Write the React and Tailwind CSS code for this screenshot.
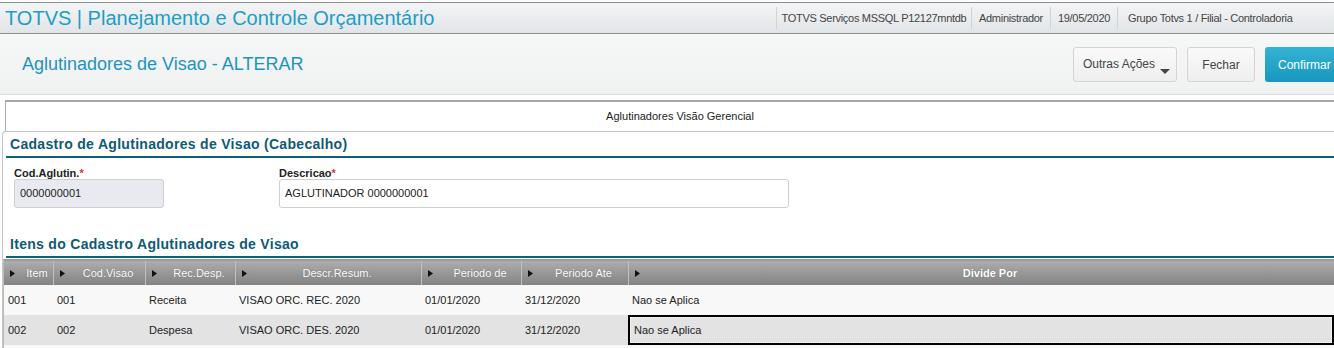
import React from "react";

const topInfo = [
  { label: "TOTVS Serviços MSSQL P12127mntdb", w: "w-[195px] justify-center" },
  { label: "Administrador", w: "w-[79px] justify-center" },
  { label: "19/05/2020", w: "w-[67px] justify-center" },
  { label: "Grupo Totvs 1 / Filial - Controladoria", w: "w-[217px] pl-[10px]" },
];

const columns = [
  { title: "Item", w: "w-[49px]" },
  { title: "Cod.Visao", w: "w-[92px]" },
  { title: "Rec.Desp.", w: "w-[90px]" },
  { title: "Descr.Resum.", w: "w-[186px]" },
  { title: "Periodo de", w: "w-[100px]" },
  { title: "Periodo Ate", w: "w-[107px]" },
  { title: "Divide Por", w: "w-[706px]", bold: true },
];

const rows = [
  ["001", "001", "Receita", "VISAO ORC. REC. 2020", "01/01/2020", "31/12/2020", "Nao se Aplica"],
  ["002", "002", "Despesa", "VISAO ORC. DES. 2020", "01/01/2020", "31/12/2020", "Nao se Aplica"],
];

const SectionTitle = ({ children }) => (
  <div className="ml-[3px] border-b-2 border-[#0e6078] pl-[4px] pb-[3px]">
    <h2 className="text-[14px] font-bold leading-[18px] tracking-[0.3px] text-[#0f5a75]">{children}</h2>
  </div>
);

const Arrow = () => (
  <svg width="5" height="7" viewBox="0 0 5 7" className="shrink-0">
    <path d="M0 0 L5 3.5 L0 7 Z" fill="#111" />
  </svg>
);

export default function App() {
  return (
    <div className="w-[1334px] h-[348px] overflow-hidden bg-white font-['Liberation_Sans',Arial,sans-serif] text-[#222]">
      {/* top bar */}
      <div className="h-[34px] pt-[2px] bg-white">
        <div className="flex h-[32px] items-center border-y border-[#8f8f8f] bg-gradient-to-b from-[#f3f4f5] to-[#e2e5e8]">
          <div className="pl-[5px] text-[20px] leading-none text-[#1b9ec8] whitespace-nowrap">
            TOTVS | Planejamento e Controle Orçamentário
          </div>
          <div className="ml-auto flex h-full items-center">
            {topInfo.map((t) => (
              <div
                key={t.label}
                className={`flex h-[22px] items-center border-l border-[#cfd3d6] whitespace-nowrap text-[11px] tracking-[-0.3px] text-[#444] ${t.w}`}
              >
                {t.label}
              </div>
            ))}
          </div>
        </div>
      </div>

      {/* page header */}
      <div className="flex h-[61px] items-center border-b border-[#dcdcdc] bg-gradient-to-b from-[#f6f7f7] to-[#f0f1f1]">
        <h1 className="pl-[22px] text-[18px] leading-none text-[#1f93c0]">Aglutinadores de Visao - ALTERAR</h1>
        <div className="ml-auto flex items-center gap-[10px] pt-[1px]">
          <button className="relative h-[35px] w-[104px] rounded-[3px] border border-[#d4d4d4] bg-gradient-to-b from-[#fafafa] to-[#eeeeee] text-[12px] text-[#444]">
            <span className="relative left-[-6px] top-[-1px]">Outras Ações</span>
            <span className="absolute right-[6px] bottom-[7px] h-0 w-0 border-x-[5px] border-t-[5px] border-x-transparent border-t-[#444]" />
          </button>
          <button className="h-[35px] w-[68px] rounded-[3px] border border-[#d4d4d4] bg-gradient-to-b from-[#fafafa] to-[#eeeeee] text-[12px] text-[#444]">
            Fechar
          </button>
          <button className="h-[35px] w-[69px] rounded-l-[3px] bg-gradient-to-b from-[#34b3d4] to-[#1697bf] pl-[13px] text-left text-[12px] text-white whitespace-nowrap">
            Confirmar
          </button>
        </div>
      </div>

      {/* tab strip */}
      <div className="pt-[5px]">
        <div className="ml-[5px] flex h-[31px] w-[1349px] items-center justify-center border-t-2 border-l border-[#a8a8a8] text-[11px] text-[#222]">
          Aglutinadores Visão Gerencial
        </div>
      </div>

      {/* form panel */}
      <div className="ml-[2px] w-[1360px] rounded-tl-[4px] border-t border-l border-[#c4c4c4] pt-[3px]">
        <SectionTitle>Cadastro de Aglutinadores de Visao (Cabecalho)</SectionTitle>

        <div className="flex pl-[11px] pt-[9px]">
          <div className="w-[265px]">
            <label className="block text-[11px] font-bold leading-[12px]">
              Cod.Aglutin.<span className="text-[#e0303a]">*</span>
            </label>
            <div className="flex h-[29px] w-[150px] items-center rounded-[3px] border border-[#cfcfcf] bg-[#e8eaf0] pl-[5px] text-[11px]">
              0000000001
            </div>
          </div>
          <div>
            <label className="block text-[11px] font-bold leading-[12px]">
              Descricao<span className="text-[#e0303a]">*</span>
            </label>
            <div className="flex h-[29px] w-[510px] items-center rounded-[3px] border border-[#cfcfcf] bg-white pl-[5px] text-[11px]">
              AGLUTINADOR 0000000001
            </div>
          </div>
        </div>

        <div className="pt-[27px]">
          <SectionTitle>Itens do Cadastro Aglutinadores de Visao</SectionTitle>
        </div>

        {/* grid */}
        <div className="mt-[1px] border-l border-[#bcbcbc]">
          <div className="flex h-[26px] border-t-2 border-[#9a9a9a] bg-gradient-to-b from-[#adadad] to-[#838383]">
            {columns.map((c, i) => (
              <div
                key={c.title}
                className={`flex h-full items-center pl-[6px] ${c.w} ${i > 0 ? "border-l border-[#c0c0c0]" : ""}`}
              >
                <Arrow />
                <span
                  className={`flex-1 pl-[6px] text-center text-[11px] text-white [text-shadow:0_0_1px_rgba(0,0,0,0.35)] ${c.bold ? "font-bold" : ""}`}
                >
                  {c.title}
                </span>
              </div>
            ))}
          </div>
          {rows.map((r, ri) => (
            <div key={ri} className={`flex h-[30px] ${ri === 0 ? "bg-[#f8f8f8]" : "bg-[#e3e3e3]"}`}>
              {r.map((cell, ci) => {
                const selected = ri === 1 && ci === 6;
                return (
                  <div
                    key={ci}
                    className={`flex items-center text-[11px] ${columns[ci].w} ${
                      selected
                        ? "border-2 border-black pl-[4px] outline-1 outline-dotted outline-white outline-offset-[-3px]"
                        : "pl-[4px]"
                    }`}
                  >
                    {cell}
                  </div>
                );
              })}
            </div>
          ))}
          <div className="h-[4px] bg-[#f8f8f8]" />
        </div>
      </div>
    </div>
  );
}
